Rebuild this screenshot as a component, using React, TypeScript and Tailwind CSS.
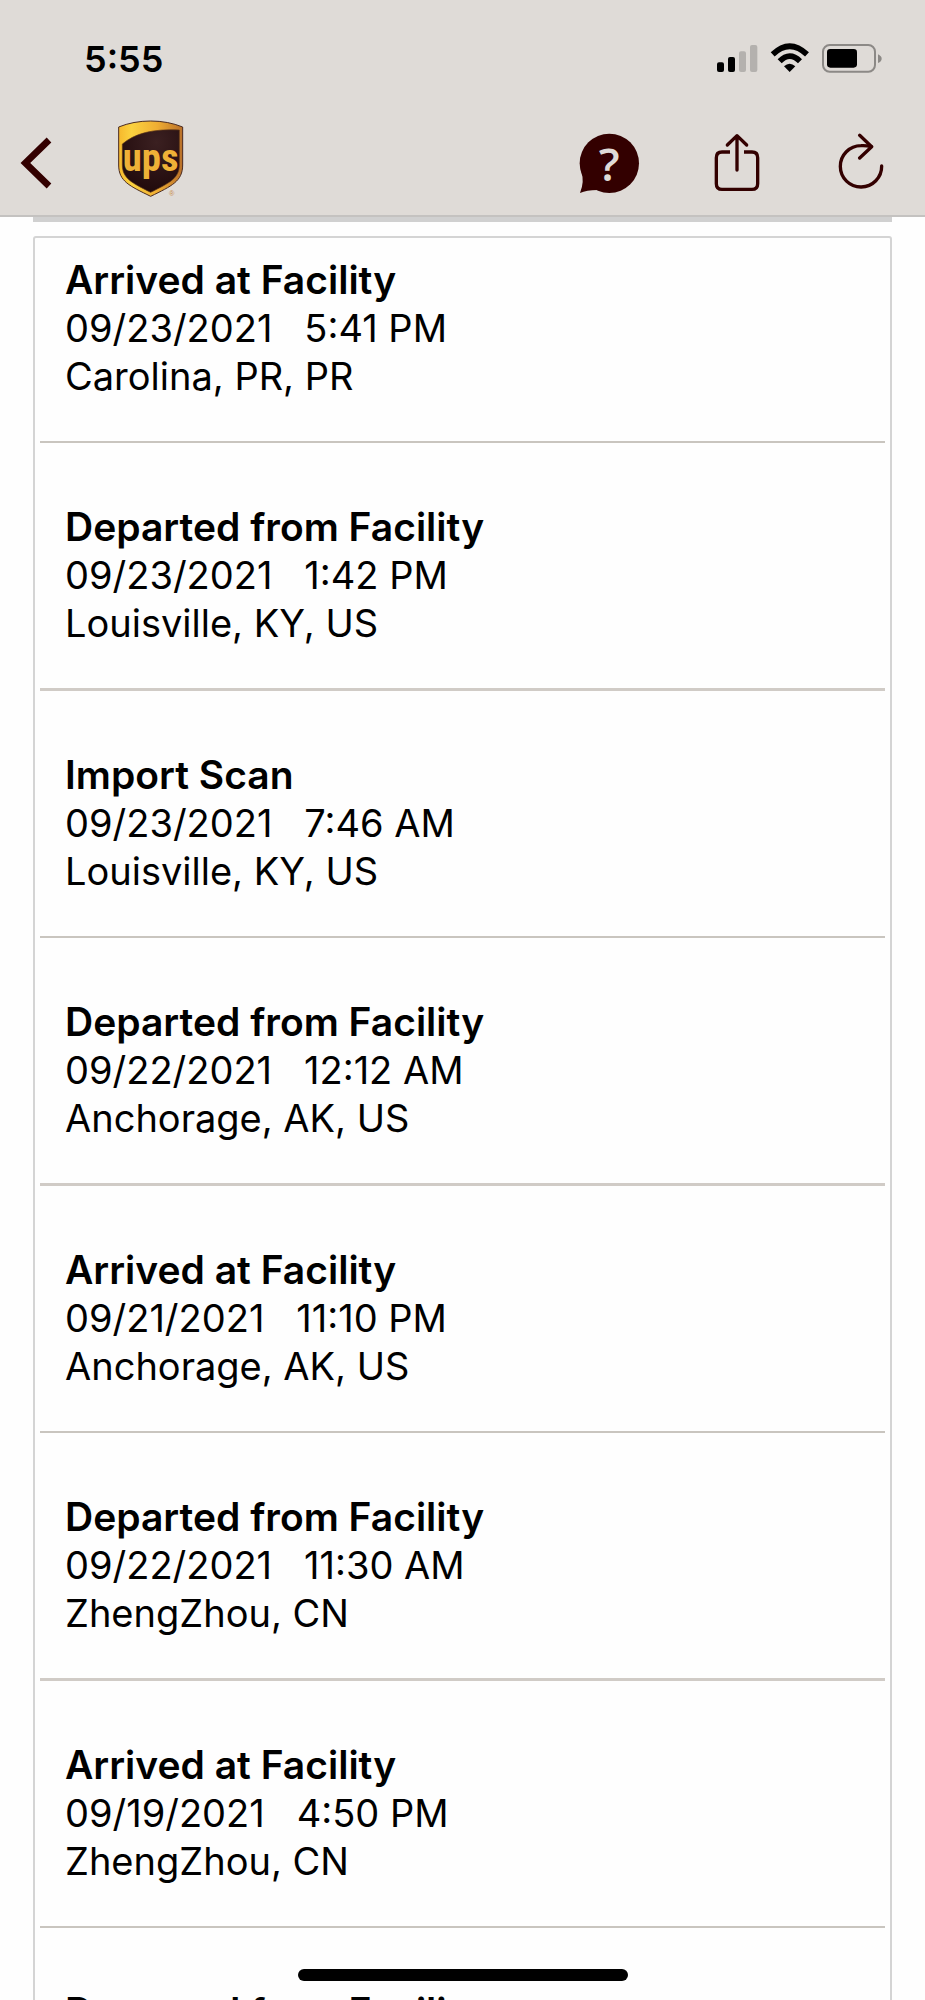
const events = [
  { title: "Arrived at Facility", date: "09/23/2021", time: "5:41 PM", place: "Carolina, PR, PR" },
  { title: "Departed from Facility", date: "09/23/2021", time: "1:42 PM", place: "Louisville, KY, US" },
  { title: "Import Scan", date: "09/23/2021", time: "7:46 AM", place: "Louisville, KY, US" },
  { title: "Departed from Facility", date: "09/22/2021", time: "12:12 AM", place: "Anchorage, AK, US" },
  { title: "Arrived at Facility", date: "09/21/2021", time: "11:10 PM", place: "Anchorage, AK, US" },
  { title: "Departed from Facility", date: "09/22/2021", time: "11:30 AM", place: "ZhengZhou, CN" },
  { title: "Arrived at Facility", date: "09/19/2021", time: "4:50 PM", place: "ZhengZhou, CN" },
  { title: "Departed from Facility", date: "", time: "", place: "" },
]

function StatusIcons() {
  return (
    <svg className="h-[30px] w-[166px]" viewBox="0 0 498 90" overflow="visible" aria-hidden="true">
      {/* Signal */}
      <rect x="3" y="55" width="21" height="29" rx="6" />
      <rect x="36" y="39" width="21" height="45" rx="6" />
      <rect x="69" y="22" width="21" height="62" rx="6" fill="#b4b1ae" />
      <rect x="102" y="3" width="22" height="81" rx="6" fill="#b4b1ae" />
      {/* Wifi */}
      <g fill="none" stroke="#000" strokeWidth="17">
        <path d="M170 31 Q221 -18 273 31" />
        <path d="M191 52 Q221 21 252 52" />
      </g>
      <path d="M204 67 Q221 52 238 67 L221 84 Z" />
      {/* Battery */}
      <rect x="321" y="3" width="156" height="80" rx="20" fill="none" stroke="#8c8986" strokeWidth="6" />
      <rect x="333" y="15" width="90" height="56" rx="10" />
      <path d="M486 31 Q497 36 497 44 Q497 52 486 57 Z" fill="#8c8986" />
    </svg>
  )
}

function ShieldLogo() {
  return (
    <svg className="h-[86px] w-[66px]" viewBox="54 30 198 258" role="img" aria-label="UPS">
      <defs>
        <linearGradient id="gold" x1="0" y1="0" x2="1" y2="0">
          <stop offset="0" stopColor="#f6b82c" />
          <stop offset="0.2" stopColor="#fbd23f" />
          <stop offset="0.6" stopColor="#f0ae33" />
          <stop offset="1" stopColor="#b9702a" />
        </linearGradient>
        <radialGradient id="brown" cx="0.6" cy="0.2" r="0.8">
          <stop offset="0" stopColor="#3b2021" />
          <stop offset="1" stopColor="#210a0c" />
        </radialGradient>
      </defs>
      <path
        d="M56 51 Q100 33 152 33 Q204 33 248 51 V165 C248 214 215 228 152 259 C89 228 56 214 56 165 Z"
        fill="url(#gold)"
        stroke="#4a2a20"
        strokeWidth="3"
      />
      <path
        d="M67 102 C105 70 158 56 238 60 V165 C238 205 208 219 152 247 C96 219 67 205 67 165 Z"
        fill="url(#brown)"
        stroke="#5b3518"
        strokeWidth="2"
      />
      <text
        x="152"
        y="182"
        textAnchor="middle"
        fill="#efb137"
        fontSize="116"
        fontWeight="700"
        fontFamily="'Roboto Condensed', Roboto, sans-serif"
      >
        ups
      </text>
      <text x="215" y="257" textAnchor="middle" fill="#c98b4c" fontSize="22" fontFamily="'Liberation Sans', sans-serif">
        ®
      </text>
    </svg>
  )
}

function HelpIcon() {
  return (
    <svg className="h-[60px] w-[60px]" viewBox="54 67 180 180" overflow="visible" aria-hidden="true">
      <circle cx="148" cy="158" r="89" fill="#330000" />
      <path d="M64 180 Q74 212 60 247 Q80 238 112 238 Z" fill="#330000" />
      <text
        x="148"
        y="210"
        textAnchor="middle"
        fill="#dfdbd7"
        fontSize="138"
        fontWeight="600"
        fontFamily="'Open Sans', 'Noto Sans', sans-serif"
      >
        ?
      </text>
    </svg>
  )
}

function ShareIcon() {
  return (
    <svg className="h-[60px] w-[48px]" viewBox="462 67 144 180" fill="none" stroke="#330000" strokeWidth="10" aria-hidden="true">
      <path d="M510 124 H486 Q469 124 469 141 V219 Q469 236 486 236 H576 Q593 236 593 219 V141 Q593 124 576 124 H552" />
      <path d="M531 178 V75 M502 103 L531 75 L560 103" strokeLinecap="round" strokeLinejoin="round" />
    </svg>
  )
}

function RefreshIcon() {
  return (
    <svg
      className="h-[60px] w-[46px]"
      viewBox="834 67 138 180"
      fill="none"
      stroke="#330000"
      strokeWidth="10"
      strokeLinecap="round"
      strokeLinejoin="round"
      aria-hidden="true"
    >
      <path d="M965 166 A62 62 0 1 1 903 105 Q918 104 934 108" />
      <path d="M899 74 L935 108 L899 142" />
    </svg>
  )
}

export default function App() {
  return (
    <div className="relative flex h-screen flex-col overflow-hidden bg-[#fefefe] font-['Inter',sans-serif] text-black">
      <header className="shrink-0 border-b-2 border-[#c4c2c0] bg-[#dfdbd7]">
        <div className="flex h-[118px] items-center justify-between pr-[43px] pl-[84px]">
          <span className="text-[36px] font-semibold">5:55</span>
          <StatusIcons />
        </div>
        <nav className="flex h-[97px] items-center justify-between pr-[41px] pb-2 pl-[20px]">
          <div className="flex items-center gap-[64px]">
            <button type="button" aria-label="Back">
              <svg className="h-[52px] w-[34px]" viewBox="0 0 102 156" fill="none" stroke="#330000" strokeWidth="20">
                <path d="M87 9 L16 78 L87 147" />
              </svg>
            </button>
            <ShieldLogo />
          </div>
          <div className="flex items-center gap-[76px]">
            <button type="button" aria-label="Help">
              <HelpIcon />
            </button>
            <button type="button" aria-label="Share">
              <ShareIcon />
            </button>
            <button type="button" aria-label="Refresh">
              <RefreshIcon />
            </button>
          </div>
        </nav>
      </header>

      <main className="min-h-0 flex-1 overflow-hidden px-[33px]">
        {/* Bottom edge of the panel scrolled under the header */}
        <div className="h-[5px] bg-[#d0d0d0]" />
        <ul className="mt-[14px] rounded-t-[3px] border-2 border-[#d4d4d4] px-[5px]">
          {events.map((event, i) => (
            <li
              key={i}
              className="border-b-2 border-[#c9c5bf] pt-[60px] pb-[41px] pl-[25px] text-[38px] leading-[48px] first:pt-[18px] even:border-b-[3px] even:border-[#d0cbc6]"
            >
              <h2 className="text-[39px] font-semibold">{event.title}</h2>
              <p className="flex gap-[32px]">
                <span>{event.date}</span>
                <span>{event.time}</span>
              </p>
              <p>{event.place}</p>
            </li>
          ))}
        </ul>
      </main>

      {/* Home indicator */}
      <div className="absolute bottom-[19px] left-1/2 h-3 w-[330px] -translate-x-1/2 rounded-full bg-black" />
    </div>
  )
}
